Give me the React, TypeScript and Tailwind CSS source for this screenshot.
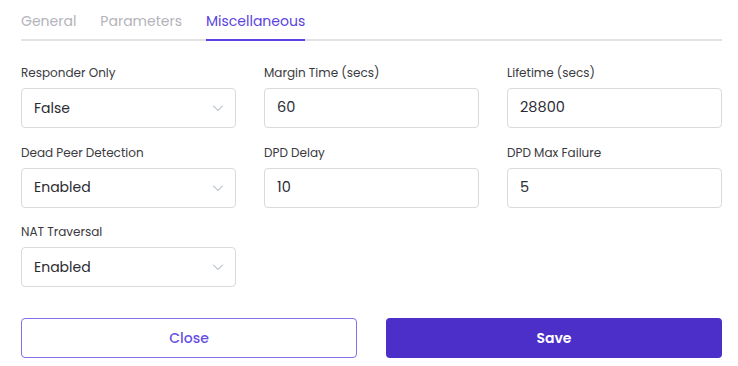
import React from "react";

const font = { fontFamily: "Poppins, Inter, 'Noto Sans', sans-serif" };

function Chevron() {
  return (
    <svg width="12" height="12" viewBox="0 0 12 12" fill="none" className="text-gray-400">
      <path d="M1.5 4l4.5 4.5L10.5 4" stroke="currentColor" strokeWidth="1" strokeLinecap="round" strokeLinejoin="round" />
    </svg>
  );
}

function SelectField({ label, value }: { label: string; value: string }) {
  return (
    <div className="flex flex-col">
      <div className="text-[12px] leading-[16px] text-[#3a3a40] mb-[7px]">{label}</div>
      <div className="h-[40px] rounded-[4px] border border-[#d9d9de] bg-white flex items-center justify-between pl-[12px] pr-[11px]">
        <span className="text-[14px] text-[#2b2b33]">{value}</span>
        <Chevron />
      </div>
    </div>
  );
}

function InputField({ label, value }: { label: string; value: string }) {
  return (
    <div className="flex flex-col">
      <div className="text-[12px] leading-[16px] text-[#3a3a40] mb-[7px]">{label}</div>
      <div className="h-[40px] rounded-[4px] border border-[#d9d9de] bg-white flex items-center pl-[12px]">
        <span className="text-[14.5px] text-[#2b2b33]">{value}</span>
      </div>
    </div>
  );
}

export default function App() {
  return (
    <div className="w-[738px] h-[366px] bg-white pl-[21px] pr-[16px] pt-[11px] box-border overflow-hidden" style={font}>
      <div className="flex border-b-2 border-[#e2e2e6] gap-[24px]">
        <div className="pb-[8px] text-[14px] leading-[20px] text-[#b3b3ba]">General</div>
        <div className="pb-[8px] text-[14px] leading-[20px] text-[#b3b3ba]">Parameters</div>
        <div className="pb-[8px] text-[14px] leading-[20px] text-[#5a43e0] border-b-2 border-[#5a43e0] -mb-[2px]">Miscellaneous</div>
      </div>
      <div className="grid grid-cols-3 gap-x-[28px] gap-y-[16.5px] mt-[24px]">
        <SelectField label="Responder Only" value="False" />
        <InputField label="Margin Time (secs)" value="60" />
        <InputField label="Lifetime (secs)" value="28800" />
        <SelectField label="Dead Peer Detection" value="Enabled" />
        <InputField label="DPD Delay" value="10" />
        <InputField label="DPD Max Failure" value="5" />
        <SelectField label="NAT Traversal" value="Enabled" />
      </div>
      <div className="grid grid-cols-2 gap-[29px] mt-[31px]">
        <button className="h-[40px] rounded-[4px] border border-[#8070ea] bg-white text-[14px] font-medium text-[#6650e2]">Close</button>
        <button className="h-[40px] rounded-[4px] bg-[#4c2fc8] text-[14px] font-semibold text-white">Save</button>
      </div>
    </div>
  );
}
